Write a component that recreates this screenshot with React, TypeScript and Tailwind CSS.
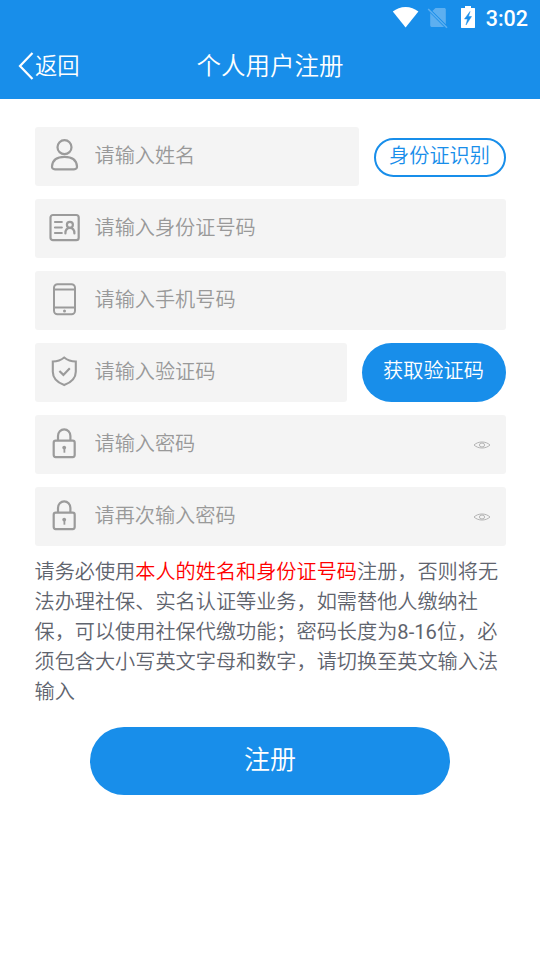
import { useState } from "react";
import type { ReactNode } from "react";

const UserIcon = () => (
  <svg className="h-9 w-9" viewBox="0 0 36 36" fill="none" stroke="#9b9b9b" strokeWidth="2.2">
    <circle cx="18.5" cy="10.2" r="7" />
    <path d="M9 32.300c-2 0-3.200-1-3-3 .6-6.300 5-9.400 12.500-9.400s11.900 3.100 12.500 9.400c.2 2-1 3-3 3z" />
  </svg>
);

const IdCardIcon = () => (
  <svg className="h-9 w-9" viewBox="0 0 36 36" fill="none" stroke="#9b9b9b" strokeWidth="2.2" strokeLinecap="round">
    <rect x="4.500" y="6" width="28.200" height="25.200" rx="2.500" />
    <path d="M9 13h6.800M9 18.500h6.800M9 24h6.800" />
    <circle cx="23.900" cy="15.800" r="3" />
    <path d="M19.400 24.400c0-3.700 1.600-5.600 4.500-5.600s4.500 1.900 4.500 5.600" />
  </svg>
);

const PhoneIcon = () => (
  <svg className="h-9 w-9" viewBox="0 0 36 36" fill="none" stroke="#9b9b9b" strokeWidth="2">
    <rect x="8" y="3.200" width="21" height="30" rx="3.500" />
    <path d="M8 8.600h21M8 26.600h21" />
    <circle cx="18.500" cy="30" r="1.500" fill="#9b9b9b" stroke="none" />
  </svg>
);

const ShieldIcon = () => (
  <svg className="h-9 w-9" viewBox="0 0 36 36" fill="none" stroke="#9b9b9b" strokeWidth="2.1">
    <path d="M18.200 4.500c3.200 2.700 7.200 4 11.600 4v10.300c0 6-4.600 10.700-11.600 13.300-7-2.600-11.400-7.300-11.400-13.300V8.500c4.400 0 8.200-1.300 11.400-4z" />
    <path d="m13.400 18 4 3.900 6.400-6.600" strokeWidth="2.200" />
  </svg>
);

const LockIcon = () => (
  <svg className="h-9 w-9" viewBox="0 0 36 36" fill="none" stroke="#9b9b9b" strokeWidth="2.2">
    <rect x="7.700" y="15.700" width="21" height="16.400" rx="2" />
    <path d="M12 15.700V11a6.200 6.700 0 0 1 12.400 0v4.700" />
    <circle cx="18.200" cy="22.600" r="1.900" fill="#9b9b9b" stroke="none" />
    <path d="M18.400 22.500v5.200" strokeWidth="1.8" />
  </svg>
);

const EyeIcon = () => (
  <svg className="h-3 w-[18px]" viewBox="0 0 18 12" fill="none" stroke="#b3b3b3" strokeWidth="1">
    <path d="M1 6c2.200-2 4.900-3 8-3s5.800 1 8 3c-2.200 2-4.900 3-8 3S3.200 8 1 6z" />
    <ellipse cx="9" cy="6" rx="2.600" ry="2" />
  </svg>
);

const StatusBar = () => (
  <div className="flex h-9 items-center justify-end pr-3 text-white">
    <svg className="mr-1.5 h-6 w-7" viewBox="0 0 28 24" fill="white">
      <path d="M.8 5.600C4.300 2.700 8.800 1 13.600 1s9.300 1.700 12.800 4.600L13.600 21.500z" />
    </svg>
    <svg className="mr-2.5 h-6 w-6" viewBox="0 0 24 24" fill="#5daff0">
      <path d="M9.500 2h8.800c.8 0 1.500.7 1.500 1.500v14.800L6.400 4.900z" />
      <path d="M4.200 7.100 18.100 21H6c-1 0-1.800-.8-1.800-1.800z" />
      <path d="M2.200 3 21 21.700" stroke="#5daff0" strokeWidth="1.600" />
    </svg>
    <svg className="mr-2.5 h-6 w-4" viewBox="0 0 16 24">
      <path d="M5 0h6v2h3.500c.3 0 .5.200.5.500v19c0 .3-.2.500-.5.500h-13c-.3 0-.5-.2-.5-.5v-19c0-.3.200-.5.500-.5H5z" fill="white" />
      <path d="M10 5.500 4.500 13h3L6 19l5.500-8.500h-3z" fill="#188eea" stroke="#188eea" strokeWidth=".5" />
    </svg>
    <span className="mt-0.5 font-[Roboto] text-[21.5px] leading-none font-medium">3:02</span>
  </div>
);

type FieldProps = {
  icon: ReactNode;
  placeholder: string;
  type?: string;
  toggle?: boolean;
};

const Field = ({ icon, placeholder, type = "text", toggle }: FieldProps) => {
  const [visible, setVisible] = useState(false);

  return (
    <div className="flex h-[58.5px] min-w-0 flex-1 items-center rounded-[3px] bg-[#f4f4f4] pr-[15px] pl-[11px]">
      <div className="mb-0.5">{icon}</div>
      <input
        type={visible ? "text" : type}
        placeholder={placeholder}
        className="mb-px ml-[13px] min-w-0 flex-1 bg-transparent text-[20.16px] text-[#333] outline-none placeholder:text-[#999]"
      />
      {toggle && (
        <button type="button" className="mt-0.5" onClick={() => setVisible((prev) => !prev)}>
          <EyeIcon />
        </button>
      )}
    </div>
  );
};

const App = () => {
  return (
    <div className="min-h-screen bg-white font-[Roboto,'Noto_Sans_CJK_SC',sans-serif] font-[350]">
      <header className="h-[99px] bg-[#188eea] text-white">
        <StatusBar />
        <div className="grid h-[60px] grid-cols-3 items-center">
          <button type="button" className="flex items-center pl-[18px]">
            <svg className="h-7 w-4" viewBox="0 0 16 28" fill="none" stroke="white" strokeWidth="2.2">
              <path d="M14.500 1 2 14l12.500 13" />
            </svg>
            <span className="mt-0.5 ml-px text-[22.3px]">返回</span>
          </button>
          <h1 className="mt-0.5 text-center text-[24.5px] font-[350] whitespace-nowrap">个人用户注册</h1>
        </div>
      </header>

      <form className="px-[34.5px] pt-7" onSubmit={(e) => e.preventDefault()}>
        <div className="flex flex-col gap-[13.5px]">
          <div className="flex items-center gap-[15px]">
            <Field icon={<UserIcon />} placeholder="请输入姓名" />
            <button
              type="button"
              className="mt-0.5 h-[39px] w-[132px] rounded-full border-2 border-[#188eea] pb-1 text-[20.16px] leading-8 text-[#188eea]"
            >
              身份证识别
            </button>
          </div>
          <div className="flex">
            <Field icon={<IdCardIcon />} placeholder="请输入身份证号码" />
          </div>
          <div className="flex">
            <Field icon={<PhoneIcon />} placeholder="请输入手机号码" />
          </div>
          <div className="flex gap-[15px]">
            <Field icon={<ShieldIcon />} placeholder="请输入验证码" />
            <button type="button" className="h-[58.5px] w-36 rounded-full bg-[#188eea] pb-0.5 text-[20.16px] text-white">
              获取验证码
            </button>
          </div>
          <div className="flex">
            <Field icon={<LockIcon />} placeholder="请输入密码" type="password" toggle />
          </div>
          <div className="flex">
            <Field icon={<LockIcon />} placeholder="请再次输入密码" type="password" toggle />
          </div>
        </div>

        <p className="mt-[11px] text-[20.16px] leading-[30px] text-[#5f646e]">
          请务必使用<span className="text-[#ff0000]">本人的姓名和身份证号码</span>
          注册，否则将无法办理社保、实名认证等业务，如需替他人缴纳社保，可以使用社保代缴功能；密码长度为
          <span className="font-normal">8-16</span>位，必须包含大小写英文字母和数字，请切换至英文输入法输入
        </p>

        <button type="submit" className="mx-auto mt-5 block h-[68px] w-[360px] rounded-full bg-[#188eea] text-[26px] text-white">
          注册
        </button>
      </form>
    </div>
  );
};

export default App;
